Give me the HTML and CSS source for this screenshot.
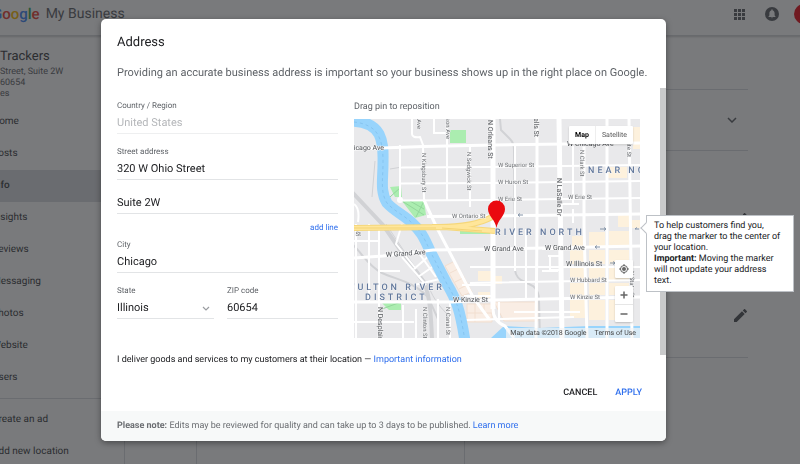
FILE: index.html
```html
<!DOCTYPE html>
<html lang="en">
<head>
  <meta charset="UTF-8">
  <title>Google My Business</title>
  <link rel="stylesheet" href="styles.css">
</head>
<body>

  <div class="app">
    <header class="topbar">
      <div class="logo">
        <span class="google"><span class="blue">G</span><span class="red">o</span><span class="yellow">o</span><span class="blue">g</span><span class="green">l</span><span class="red">e</span></span>
        <span class="product">My Business</span>
      </div>
      <div class="top-icons">
        <svg class="apps-icon" viewBox="0 0 11 11" width="11" height="11">
          <path d="M0 0h3v3H0zM4 0h3v3H4zM8 0h3v3H8zM0 4h3v3H0zM4 4h3v3H4zM8 4h3v3H8zM0 8h3v3H0zM4 8h3v3H4zM8 8h3v3H8z" fill="#5f6368"/>
        </svg>
        <svg class="bell-icon" viewBox="0 0 14 14" width="14" height="14">
          <circle cx="7" cy="7" r="7" fill="#5f6368"/>
          <path d="M3.6 10V9.3l.8-.8V6.3c0-1.400.7-2.400 1.900-2.700V3a.7.7 0 0 1 1.400 0v.6c1.200.3 1.900 1.300 1.900 2.700v2.200l.8.8V10zM6.200 10.500h1.600a.8.8 0 0 1-1.600 0z" fill="#fff"/>
        </svg>
        <span class="avatar"></span>
      </div>
    </header>

    <div class="page">
      <aside class="sidebar">
        <div class="business">
          <h1>Trackers</h1>
          <p>Street, Suite 2W</p>
          <p>60654</p>
          <p>es</p>
        </div>
        <nav>
          <a href="#">Home</a>
          <a href="#">Posts</a>
          <a href="#" class="active">Info</a>
          <a href="#">Insights</a>
          <a href="#">Reviews</a>
          <a href="#">Messaging</a>
          <a href="#">Photos</a>
          <a href="#">Website</a>
          <a href="#">Users</a>
        </nav>
        <nav class="more">
          <a href="#">Create an ad</a>
          <a href="#">Add new location</a>
        </nav>
      </aside>
      <main class="info">
        <div class="info-list">
          <div class="row row-head"></div>
          <div class="row row-category">
            <svg viewBox="0 0 10 6" width="10" height="6"><path d="M1 1l4 4 4-4" fill="none" stroke="#5f6368" stroke-width="1.500"/></svg>
          </div>
          <div class="row row-edit">
            <svg viewBox="3 3 18 18" width="13" height="13"><path d="M3 17.250V21h3.750L17.810 9.940l-3.750-3.750zM20.710 7.040a1 1 0 0 0 0-1.410l-2.340-2.340a1 1 0 0 0-1.410 0l-1.830 1.830 3.750 3.750z" fill="#505459"/></svg>
            <svg viewBox="3 3 18 18" width="13" height="13"><path d="M3 17.250V21h3.750L17.810 9.940l-3.750-3.750zM20.710 7.040a1 1 0 0 0 0-1.410l-2.340-2.340a1 1 0 0 0-1.410 0l-1.830 1.830 3.750 3.750z" fill="#505459"/></svg>
          </div>
          <div class="info-columns"></div>
        </div>
      </main>
    </div>
  </div>

  <div class="overlay">
    <form class="dialog" role="dialog" aria-labelledby="dialog-title">
      <div class="dialog-head">
        <h2 id="dialog-title">Address</h2>
        <p>Providing an accurate business address is important so your business shows up in the right place on Google.</p>
      </div>

      <div class="dialog-body">
        <div class="columns">
          <div class="fields">
            <div class="field disabled">
              <label for="country">Country / Region</label>
              <input id="country" type="text" value="United States" disabled>
            </div>
            <div class="field">
              <label for="street">Street address</label>
              <input id="street" type="text" value="320 W Ohio Street">
            </div>
            <div class="field line-two">
              <input type="text" value="Suite 2W" aria-label="Street address line 2">
            </div>
            <a href="#" class="add-line">add line</a>
            <div class="field">
              <label for="city">City</label>
              <input id="city" type="text" value="Chicago">
            </div>
            <div class="split">
              <div class="field select-field">
                <label for="state">State</label>
                <select id="state"><option>Illinois</option></select>
                <svg class="caret" viewBox="0 0 8 5" width="8" height="5"><path d="M1 1l3 3 3-3" fill="none" stroke="#9a9da1" stroke-width="1.200"/></svg>
              </div>
              <div class="field">
                <label for="zip">ZIP code</label>
                <input id="zip" type="text" value="60654">
              </div>
            </div>
          </div>

          <div class="map-column">
            <p class="map-title">Drag pin to reposition</p>
            <div class="map">
              <svg class="map-canvas" viewBox="0 0 286 219">
                <rect width="286" height="219" fill="#e9e9eb"/>

                <!-- building blocks -->
                <g fill="#fdf1dd">
                  <path d="M253 48h20v11h-20zM279 8h7v22h-7zM264 96h11v12h-11zM277 101h9v8h-9z"/>
                  <path d="M218 117h13v10h-13zM235 113h16v14h-16zM255 112h20v15h-20zM216 131h15v14h-15zM235 131h16v14h-16zM255 131h20v14h-20zM216 149h15v12h-15zM235 149h16v12h-16zM255 149h20v12h-20zM216 164h15v35h-15zM235 164h16v12h-16zM255 164h20v12h-20zM235 181h16v20h-16zM255 181h20v20h-20z"/>
                  <path d="M124 152h15v10h-15zM124 173h12v6h-12zM137 157h11v8h-11z"/>
                </g>
                <g fill="#f9ede4" stroke="#f2dfd0">
                  <path d="M91 147l10-5 17 31-10 4zM113 185h25v18h-25zM140 183h44v19h-34z"/>
                  <path d="M96 154l10-5M101 163l10-5M105 170l10-5M121 185v18M113 194h25M130 185v9" fill="none"/>
                </g>

                <!-- parks -->
                <path d="M96 11h16v13H96zM36 68l11-1 1 11H41zM48 82l22-1 2 15-11 3zM28 184l19-1v8H35zM106 112h30v3h-30z" fill="#abedb0"/>
                <path d="M48 82l22 14M56 82l14 8M62 98l8-16M36 78l11-10M28 190l19-7" fill="none" stroke="#93d69b"/>

                <!-- rail lines -->
                <g fill="none" stroke="#d1d2d5">
                  <path d="M-2 73L29 106 51 138 71 165C76 180 77 195 78 220" stroke-width="4"/>
                  <path d="M-1 126C8 134 14 147 28 154 44 161 60 163 74 178L84 200" stroke-width="2"/>
                  <path d="M32 105L54 138 74 166C80 182 88 190 96 198" stroke-width="1"/>
                  <path d="M146 0l1 11 9 9q4 4 4 11l1 120q1 9 10 12l8 4q6 5 6 14l1 40" stroke-width="2"/>
                  <path d="M21 42L18 78M36 50l12-2" stroke-width="1"/>
                </g>

                <!-- minor streets -->
                <g fill="none" stroke="#fff" stroke-width="2">
                  <path d="M47 48.500L136 48 286 46M47 64.500L136 64 286 62M46 81.500L136 81 286 79"/>
                  <path d="M46 26v55M93 6v75M116 28v60M58 0v15q0 4 8 3l3 8 1 55M80 0v14h14"/>
                  <path d="M2 105v114M15 105v78M25 108v111M0 203h60M0 122h26M26 152h20M60 150l16-14M64 158l20-14M60 166l26-6M48 138l24 28M62 130l20 28M48 105l-6 20 20 25M49 186v33M62 190v29M84 180v39M96 184v35"/>
                  <path d="M161 27v125M172 110v70M188 130h16M194 137h12M196 137v14h10M188 152h16M225 85h-18M219 27v58M219 90v14M160 193h66M0 85q6 4 4 18"/>
                  <path d="M116 148H286M116 164L286 161M112 201L220 198M108 166h30M110 177h28M145 183v20"/>
                </g>

                <!-- water -->
                <path d="M-4 2C10 2 20 6 25 15 30 25 29 35 29 45 29 60 26 73 33 84 40 92 50 96 58 104 66 111 70 118 76 132L93 165C102 180 106 190 111 222" fill="none" stroke="#98d4fc" stroke-width="11"/>
                <path d="M137 219l13-12 36 2 50-2h50v12z" fill="#98d4fc"/>
                <path d="M0 3C10 4 20 8 24 16 29 25 29 35 29 45 29 60 26 73 33 84 40 92 50 96 58 104 66 111 70 118 76 132L93 165C102 180 106 190 111 222" fill="none" stroke="#86c4f0" stroke-dasharray="3 3"/>

                <!-- main streets -->
                <g fill="none" stroke="#fff" stroke-width="3">
                  <path d="M0 30Q70 27 139 26L286 24M73 97.500L139 97 286 95M70 81L82 107 119 178 135 200"/>
                  <path d="M183 0v107l-1 112M230 27v80l3 112M253 0v219M275 0l3 219M139 190q0 12 12 17l9 12"/>
                  <path d="M0 139L29 137 79 131 146 130 286 127M0 183L99 183 139 181 286 178"/>
                </g>
                <path d="M139 0v190M205 0l3 219" fill="none" stroke="#fff" stroke-width="5"/>
                <circle cx="46" cy="81" r="3" fill="#fff"/>

                <!-- Ohio St ramp -->
                <g fill="none">
                  <path d="M0 109L90 108 141 112M78 108Q118 109 138 98" stroke="#f5d77b" stroke-width="6"/>
                  <path d="M0 109L90 108 141 112M78 108Q118 109 138 98" stroke="#ffe69a" stroke-width="4"/>
                  <path d="M0 109h82M88 109l40 3" stroke="#f3d374"/>
                </g>

                <g fill="none" stroke="#8494a8">
                  <path d="M164 96h5m-5 0l2-1.500m-2 1.500l2 1.500M241 128h5m-5 0l2-1.500m-2 1.500l2 1.500M246 110h6m0 0l-2-1.500m2 1.500l-2 1.500M256 144h5m0 0l-2-1.500m2 1.500l-2 1.500M281 110h4m-4 0l2-1.500"/>
                </g>

                <g class="street major">
                  <text x="30" y="31" text-anchor="end">Chicago Ave</text>
                  <text x="213" y="27">W Chicago Ave</text>
                  <text x="32" y="138" transform="rotate(-4 32 138)">W Grand Ave</text>
                  <text x="130" y="132">W Grand Ave</text>
                  <text x="191" y="131">W Grand Ave</text>
                  <text x="212" y="147">W Illinois St</text>
                  <text x="99" y="183">W Kinzie St</text>
                  <text transform="translate(134 1) rotate(90)">N Orleans St</text>
                  <text transform="translate(203 59) rotate(90)">N LaSalle Dr</text>
                  <text transform="translate(180 18) rotate(90)" text-anchor="end">N Wells St</text>
                  <text transform="translate(24 188) rotate(90)">N Desplaines St</text>
                </g>
                <g class="street">
                  <text x="144" y="48">W Superior St</text>
                  <text x="144" y="65">W Huron St</text>
                  <text x="144" y="82">W Erie St</text>
                  <text x="214" y="80">W Erie St</text>
                  <text x="98" y="99">W Ontario St</text>
                  <text x="216" y="163">W Hubbard St</text>
                  <text x="216" y="180">W Kinzie St</text>
                  <text x="7" y="117" text-anchor="end">W Ohio St</text>
                  <text transform="translate(68 34) rotate(90)">N Kingsbury St</text>
                  <text transform="translate(113 33) rotate(90)">N Sedgwick St</text>
                  <text transform="translate(226 31) rotate(90)">N Clark St</text>
                  <text transform="translate(273 38) rotate(90)" text-anchor="end">N State St</text>
                  <text transform="translate(276 152) rotate(90)">N State St</text>
                  <text transform="translate(63 10) rotate(90)" text-anchor="end">Larrabee Ave</text>
                  <text transform="translate(92 20) rotate(90)" text-anchor="end">N Hudson Ave</text>
                  <text transform="translate(69 188) rotate(90)">N Clinton St</text>
                  <text transform="translate(92 188) rotate(90)">N Canal St</text>
                </g>
                <g class="district">
                  <text x="234" y="54">NEAR NORTH</text>
                  <text x="141" y="116">RIVER NORTH</text>
                  <text x="91" y="171" text-anchor="end">FULTON RIVER</text>
                  <text x="11" y="181">DISTRICT</text>
                </g>

                <!-- marker -->
                <path d="M142.500 109C141.500 101 134 97 134 90a8.500 8.500 0 0 1 17 0c0 7-7.500 11-8.500 19z" fill="#ea0a0f"/>
              </svg>

              <div class="map-type">
                <button type="button" class="on">Map</button>
                <button type="button">Satellite</button>
              </div>
              <div class="map-tools">
                <button type="button" class="locate" aria-label="Center on location">
                  <svg viewBox="0 0 12 12" width="12" height="12"><circle cx="6" cy="6" r="3.500" fill="none" stroke="#666"/><circle cx="6" cy="6" r="2" fill="#666"/><path d="M6 1v2M6 9v2M1 6h2M9 6h2" stroke="#666"/></svg>
                </button>
                <div class="zoom">
                  <button type="button" aria-label="Zoom in"><svg viewBox="0 0 8 8" width="8" height="8"><path d="M4 .5v7M.5 4h7" stroke="#666" stroke-width="1.500"/></svg></button>
                  <button type="button" aria-label="Zoom out"><svg viewBox="0 0 8 8" width="8" height="8"><path d="M.5 4h7" stroke="#666" stroke-width="1.500"/></svg></button>
                </div>
              </div>
              <div class="map-credit">
                <span>Map data ©2018 Google</span>
                <a href="#">Terms of Use</a>
              </div>

              <div class="tooltip" role="tooltip">
                <p>To help customers find you, drag the marker to the center of your location.</p>
                <p><b>Important:</b> Moving the marker will not update your address text.</p>
              </div>
            </div>
          </div>
        </div>
        <div class="scrollbar"></div>
      </div>

      <p class="deliver">I deliver goods and services to my customers at their location — <a href="#">Important information</a></p>

      <div class="actions">
        <button type="button">CANCEL</button>
        <button type="submit" class="apply">APPLY</button>
      </div>

      <p class="note"><b>Please note:</b> Edits may be reviewed for quality and can take up to 3 days to be published. <a href="#">Learn more</a></p>
    </form>
  </div>

</body>
</html>
```

FILE: styles.css
```css
* {
  box-sizing: border-box;
}

body {
  margin: 0;
  font-family: Roboto, "Liberation Sans", sans-serif;
  font-size: 10px;
  color: #202124;
  text-rendering: geometricPrecision;
  overflow: hidden;
}

h1, h2, p {
  margin: 0;
  font-weight: 400;
}

a {
  color: #2f6fed;
  text-decoration: none;
}

button, input, select {
  font: inherit;
  color: inherit;
  text-rendering: inherit;
  border: 0;
  padding: 0;
  margin: 0;
  background: none;
}

button {
  cursor: pointer;
}

svg {
  display: block;
}

/* page behind the dialog */

.app {
  margin: 0 -8px;
  height: 100vh;
  display: flex;
  flex-direction: column;
  overflow: hidden;
  background: #fff;
}

.topbar {
  flex: none;
  height: 36px;
  padding-bottom: 7px;
  display: flex;
  align-items: center;
  justify-content: space-between;
  border-bottom: 1px solid #d5d7da;
  box-shadow: 0 1px 2px rgba(0, 0, 0, 0.2);
}

.logo {
  display: flex;
  align-items: center;
  gap: 6px;
  font-size: 14px;
}

.google {
  font-size: 15px;
  font-weight: 500;
}

.product {
  color: #5f6368;
}

.blue { color: #4285f4; }
.red { color: #ea4335; }
.yellow { color: #fbbc05; }
.green { color: #34a853; }

.top-icons {
  display: flex;
  align-items: center;
  gap: 24px;
}

.bell-icon {
  margin-left: -4px;
}

.avatar {
  width: 14px;
  height: 20px;
  margin-left: -9px;
  border-radius: 10px 0 0 10px;
  background: #e8101c;
}

.page {
  flex: 1;
  display: flex;
  min-height: 0;
}

.sidebar {
  width: 133px;
  border-right: 1px solid #dadce0;
}

.business {
  height: 70px;
  padding: 10px 0 0 8px;
  color: #5f6368;
}

.business h1 {
  font-size: 13px;
  line-height: 21px;
  color: #3c4043;
}

.business p {
  font-size: 9px;
  line-height: 11px;
}

.sidebar nav a {
  display: block;
  line-height: 32px;
  color: #3c4043;
}

.sidebar nav .active {
  background: #dadce0;
  font-weight: 500;
}

.sidebar .more {
  margin-top: 4px;
  padding-top: 5px;
  border-top: 1px solid #dadce0;
}

.info {
  flex: 1;
  padding: 0 60px 0 71px;
}

.info-list {
  height: 100%;
  display: flex;
  flex-direction: column;
  border-left: 1px solid #dadce0;
}

.row {
  display: flex;
  flex-direction: column;
  align-items: flex-end;
  border-bottom: 1px solid #dadce0;
}

.row-head {
  height: 54px;
}

.row-category {
  height: 61px;
  padding-right: 11px;
  justify-content: center;
}

.row-edit {
  height: 207px;
  padding: 62px 1px 0 0;
  gap: 83px;
}

.info-columns {
  flex: 1;
  width: 268px;
  border-right: 1px solid #dadce0;
}

/* dialog */

.overlay {
  position: fixed;
  inset: 0;
  padding: 19px 134px 0 101px;
  background: rgba(32, 33, 36, 0.6);
}

.dialog {
  background: #fff;
  border-radius: 5px;
  box-shadow: 0 2px 6px rgba(0, 0, 0, 0.4);
}

.dialog-head {
  padding: 16px 16px 7px;
}

.dialog-head h2 {
  font-size: 13px;
  line-height: 16px;
}

.dialog-head p {
  margin-top: 13px;
  font-size: 11px;
  line-height: 17px;
  color: #5f6368;
}

.dialog-body {
  display: flex;
  justify-content: space-between;
}

.columns {
  flex: 1;
  display: grid;
  grid-template-columns: 221fr 286fr;
  gap: 16px;
  padding: 12px 20px 0 16px;
}

.scrollbar {
  width: 6px;
  height: 267px;
  margin-bottom: -17px;
  background: #c9cacb;
}

.field {
  display: flex;
  flex-direction: column;
  margin-bottom: 12px;
}

.field label {
  font-size: 8px;
  line-height: 12px;
  color: #5f6368;
}

.field input,
.field select {
  width: 100%;
  height: 22px;
  font-size: 11px;
  border-bottom: 1px solid #e2e4e6;
  border-radius: 0;
  appearance: none;
}

.field.disabled input {
  color: #b5b7ba;
  border-bottom-color: #eeeff0;
}

.field.line-two {
  margin-bottom: 8px;
}

.add-line {
  display: block;
  margin-bottom: 5px;
  font-size: 8px;
  line-height: 12px;
  text-align: right;
}

.split {
  display: grid;
  grid-template-columns: 97fr 111fr;
  gap: 13px;
}

.select-field {
  position: relative;
}

.caret {
  position: absolute;
  right: 4px;
  bottom: 8px;
  pointer-events: none;
}

/* map */

.map-title {
  font-size: 9px;
  line-height: 14px;
  color: #5f6368;
  margin-bottom: 5px;
}

.map {
  position: relative;
}

.map-canvas {
  width: 100%;
}

.street {
  font-size: 6px;
  fill: #6f7276;
  stroke: #f4f4f5;
  stroke-width: 1px;
  paint-order: stroke;
}

.street.major {
  font-size: 7px;
  fill: #505357;
}

.district {
  font-size: 9px;
  font-weight: 500;
  letter-spacing: 3px;
  fill: #62789c;
  stroke: #f4f4f5;
  stroke-width: 1px;
  paint-order: stroke;
}

.map-type {
  position: absolute;
  top: 7px;
  right: 7px;
  display: flex;
  background: #fff;
  border-radius: 1px;
  box-shadow: 0 1px 2px rgba(0, 0, 0, 0.2);
  font-size: 7px;
  line-height: 18px;
  color: #565656;
}

.map-type button {
  padding: 0 6px;
}

.map-type .on {
  font-weight: 700;
  color: #000;
  border-right: 1px solid #eee;
}

.map-tools {
  position: absolute;
  right: 7px;
  bottom: 16px;
  display: flex;
  flex-direction: column;
  gap: 8px;
}

.map-tools button {
  display: flex;
  align-items: center;
  justify-content: center;
  width: 18px;
  height: 18px;
}

.map-tools .locate,
.zoom {
  background: #fff;
  border-radius: 1px;
  box-shadow: 0 1px 2px rgba(0, 0, 0, 0.2);
}

.map-tools .zoom button + button {
  border-top: 1px solid #e6e6e6;
}

.map-credit {
  position: absolute;
  right: 0;
  bottom: 0;
  display: flex;
  gap: 8px;
  padding: 0 4px;
  background: rgba(245, 245, 245, 0.7);
  font-size: 7px;
  line-height: 10px;
  color: #444;
}

.map-credit a {
  color: inherit;
}

.tooltip {
  position: absolute;
  left: calc(100% + 6px);
  top: 96px;
  width: 148px;
  padding: 5px 12px 4px 7px;
  background: #fff;
  border: 1px solid #bdc1c6;
  font-size: 9px;
  line-height: 11px;
}

.tooltip::before {
  content: "";
  position: absolute;
  left: -5px;
  top: 8px;
  width: 7px;
  height: 7px;
  background: #fff;
  border: 1px solid #bdc1c6;
  border-width: 0 0 1px 1px;
  transform: rotate(45deg);
}

/* bottom of the dialog */

.deliver {
  padding: 0 16px;
  margin-top: 14px;
  font-size: 9px;
  line-height: 16px;
}

.actions {
  display: flex;
  justify-content: flex-end;
  gap: 18px;
  margin-top: 17px;
  padding: 0 24px 10px;
  font-size: 9px;
  line-height: 16px;
  font-weight: 500;
}

.apply {
  color: #2f6fed;
}

.note {
  padding: 0 16px;
  background: #f7f9f9;
  border-radius: 0 0 5px 5px;
  font-size: 9px;
  line-height: 30px;
  color: #6b6e72;
}
```
